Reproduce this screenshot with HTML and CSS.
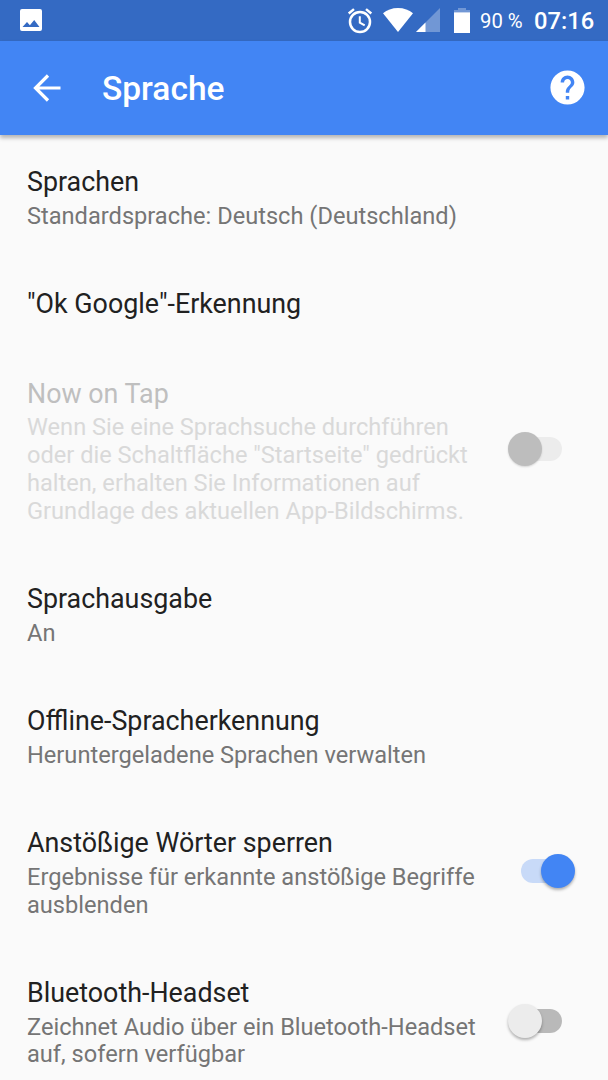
FILE: index.html
```html
<!DOCTYPE html>
<html lang="de">

<head>
    <meta charset="UTF-8">
    <meta name="viewport" content="width=device-width, initial-scale=1.0">
    <title>Sprache</title>
    <link rel="stylesheet" href="styles.css">
</head>

<body>

    <div class="status">
        <svg class="photo" width="22" height="22" viewBox="0 0 22 22">
            <path fill="#fff" fill-rule="evenodd" d="M2 0h18a2 2 0 0 1 2 2v18a2 2 0 0 1-2 2H2a2 2 0 0 1-2-2V2a2 2 0 0 1 2-2zM2.500 18h17l-5.300-7-4.300 5.300-2.900-3.300z" />
        </svg>
        <svg class="alarm" width="26" height="26" viewBox="0 0 26 26">
            <g fill="none" stroke="#fff" stroke-width="2.500">
                <circle cx="13" cy="14" r="10" />
                <path d="M12.800 8.300v6.300l4.900 2.800" stroke-width="2" />
                <path d="M1.700 5.500l5.300-4.400M24.300 5.500L19 1.100" />
            </g>
        </svg>
        <svg class="wifi" width="30" height="24" viewBox="0 0 30 24">
            <path fill="#fff" d="M15 24L0 5.200C4 2 9 0 15 0s11 2 15 5.200z" />
        </svg>
        <svg class="signal" width="24" height="24" viewBox="0 0 24 24">
            <path fill="#fff" fill-opacity=".3" d="M0 24L24 0v24z" />
            <path fill="#fff" d="M0 24l9.500-9.500V24z" />
        </svg>
        <svg class="battery" width="16" height="25" viewBox="0 0 16 25">
            <path fill="#fff" fill-opacity=".3" d="M4 0h8v2h4v2.300H0V2h4z" />
            <path fill="#fff" d="M0 4.300h16V25H0z" />
        </svg>
        <span class="percent">90 %</span>
        <span class="time">07:16</span>
    </div>

    <header>
        <svg class="back" width="28" height="28" viewBox="0 0 28 28">
            <path fill="none" stroke="#fff" stroke-width="3.200" d="M27.500 14H3M15 1.500L2.500 14 15 26.500" />
        </svg>
        <h1>Sprache</h1>
        <svg class="help" width="41" height="41" viewBox="0 0 24 24">
            <path fill="#fff" d="M12 2C6.480 2 2 6.480 2 12s4.480 10 10 10 10-4.480 10-10S17.520 2 12 2zm1 17h-2v-2h2v2zm2.070-7.750l-.9.920C13.450 12.900 13 13.500 13 15h-2v-.5c0-1.100.450-2.100 1.170-2.830l1.240-1.260c.370-.360.590-.860.590-1.410 0-1.100-.9-2-2-2s-2 .9-2 2H8c0-2.210 1.790-4 4-4s4 1.790 4 4c0 .880-.360 1.680-.930 2.250z" />
        </svg>
    </header>

    <ul class="list">
        <li>
            <div class="text">
                <h2>Sprachen</h2>
                <p>Standardsprache: Deutsch (Deutschland)</p>
            </div>
        </li>
        <li>
            <div class="text">
                <h2>"Ok Google"-Erkennung</h2>
            </div>
        </li>
        <li class="disabled">
            <div class="text">
                <h2>Now on Tap</h2>
                <p>Wenn Sie eine Sprachsuche durchführen oder die Schaltfläche "Startseite" gedrückt halten, erhalten Sie Informationen auf Grundlage des aktuellen App-Bildschirms.</p>
            </div>
            <div class="switch"><span></span></div>
        </li>
        <li>
            <div class="text">
                <h2>Sprachausgabe</h2>
                <p>An</p>
            </div>
        </li>
        <li>
            <div class="text">
                <h2>Offline-Spracherkennung</h2>
                <p>Heruntergeladene Sprachen verwalten</p>
            </div>
        </li>
        <li>
            <div class="text">
                <h2>Anstößige Wörter sperren</h2>
                <p>Ergebnisse für erkannte anstößige Begriffe ausblenden</p>
            </div>
            <div class="switch on"><span></span></div>
        </li>
        <li>
            <div class="text">
                <h2>Bluetooth-Headset</h2>
                <p>Zeichnet Audio über ein Bluetooth-Headset auf, sofern verfügbar</p>
            </div>
            <div class="switch"><span></span></div>
        </li>
    </ul>

</body>

</html>
```
FILE: styles.css
```css
* {
    padding: 0;
    margin: 0;
    box-sizing: border-box;
}

html,
body {
    height: 100%;
}

body {
    display: flex;
    flex-direction: column;
    overflow: hidden;
    background: #fafafa;
    font-family: Roboto, "Noto Sans", sans-serif;
}

.status {
    flex: none;
    display: flex;
    align-items: flex-start;
    height: 41px;
    padding: 8px 14px 0 19.5px;
    background: #346ac3;
    color: #fff;
}

.photo {
    margin-top: 1px;
}

.alarm {
    margin-left: auto;
    margin-right: 10px;
}

.signal {
    margin-left: 3px;
    margin-right: 14.5px;
}

.percent {
    width: 42px;
    margin-left: 10px;
    margin-right: 12px;
    font-size: 20.3px;
    line-height: 27px;
    white-space: nowrap;
}

.time {
    width: 60px;
    font-size: 23.7px;
    font-weight: 500;
    line-height: 27px;
}

header {
    flex: none;
    display: flex;
    align-items: center;
    height: 94px;
    padding: 0 20px 1px 33px;
    background: #4285f4;
    box-shadow: 0 3px 4px rgba(0, 0, 0, .28);
    color: #fff;
}

header h1 {
    flex: 1;
    margin-left: 41px;
    padding-top: 2px;
    font-size: 33.5px;
    font-weight: 500;
    line-height: 40px;
}

.list {
    flex: none;
    padding-top: 2px;
    list-style: none;
}

.list li {
    display: flex;
    align-items: center;
    padding: 29px 33px 28.5px 27px;
}

.text {
    flex: 1;
}

.text h2 {
    color: #212121;
    font-size: 26.85px;
    font-weight: 400;
    line-height: 32px;
}

.text p {
    margin-top: 4.9px;
    color: #757575;
    font-size: 23.62px;
    line-height: 27.7px;
}

.disabled h2 {
    color: #bfbfbf;
}

.disabled p {
    color: #d9d9d9;
}

.switch {
    position: relative;
    display: flex;
    align-items: center;
    width: 67px;
    height: 34px;
    margin-left: 27px;
    margin-bottom: 4px;
}

.switch::before {
    content: "";
    width: 41px;
    height: 24px;
    margin: 0 13px;
    border-radius: 12px;
    background: #b9b9b9;
}

.switch span {
    position: absolute;
    left: 0;
    top: 0;
    width: 34px;
    height: 34px;
    border-radius: 50%;
    background: #ececec;
    box-shadow: 0 2px 3px rgba(0, 0, 0, .3);
}

.switch.on::before {
    background: #c8daf8;
}

.switch.on span {
    left: 33px;
    background: #4285f4;
}

.disabled .switch::before {
    background: #ececec;
}

.disabled .switch span {
    background: #bdbdbd;
    box-shadow: 0 1px 2px rgba(0, 0, 0, .15);
}
```
